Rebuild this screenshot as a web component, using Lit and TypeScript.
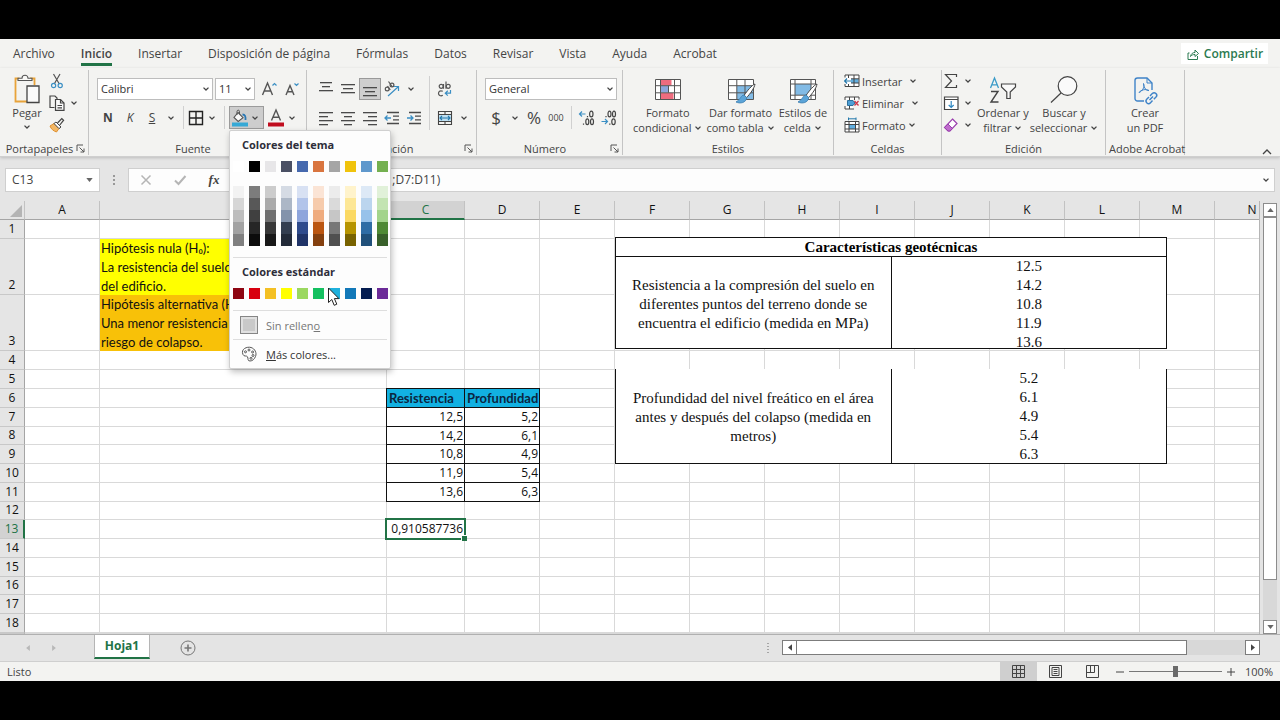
import { LitElement, html, css, nothing, TemplateResult } from "lit";
import { customElement, state } from "lit/decorators.js";
import { classMap } from "lit/directives/class-map.js";
import { styleMap } from "lit/directives/style-map.js";

const chevron = html`<svg class="chev" viewBox="0 0 8 8" width="8" height="8" aria-hidden="true"><path d="M1.500 2.600 4 5l2.500-2.400" fill="none" stroke="#444" stroke-width="1.300"/></svg>`;

const lines = (rows: number[][]) => html`<svg viewBox="0 0 16 16" width="16" height="16" aria-hidden="true">${rows.map(
  ([x, y, w]) => html`<svg x=${x} y=${y} width=${w} height="1.300"><rect width="100%" height="100%" fill="#4a4a4a"/></svg>`
)}</svg>`;

const icon = {
  paste: html`<svg viewBox="0 0 28 30" width="28" height="30" fill="none"><path d="M6.500 4.500H2.500v23H15M17 4.500h4.500V11" stroke="#e8a33a" stroke-width="1.800"/><path d="M5 6.500h14V4.200h-4a3 3 0 0 0-6 0H5z" fill="#f8f8f6" stroke="#555" stroke-width="1.100"/><path d="M14 12h12v16.500H14z" fill="#fafafa" stroke="#444" stroke-width="1.300"/></svg>`,
  cut: html`<svg viewBox="0 0 16 16" width="16" height="16" fill="none"><path d="m4.500 1 5.800 10M11 1 5.200 11" stroke="#555" stroke-width="1.200"/><circle cx="4.600" cy="12.500" r="2.100" stroke="#3b8fc4" stroke-width="1.200"/><circle cx="11.200" cy="12.500" r="2.100" stroke="#3b8fc4" stroke-width="1.200"/></svg>`,
  copy: html`<svg viewBox="0 0 16 16" width="16" height="16" fill="none" stroke="#444" stroke-width="1.200"><path d="M5.500 12.500H1V1h5l2 2v1"/><path d="M6.500 4.500h5l3.500 3.500v7.300H6.500z" fill="#fafafa"/><path d="M11.500 4.500V8H15M8.500 10.500h4.500M8.500 12.800h4.500"/></svg>`,
  brush: html`<svg viewBox="0 0 16 16" width="16" height="16" fill="none"><path d="m1 9 4-2.500 5 5L7.500 15C4.500 14 2 12 1 9z" fill="#f3b765" stroke="#df8f2d"/><path d="m5 6.500 2-1.500 5 5-2 1.600z" fill="#fff" stroke="#444"/><path d="m8.500 6 4.300-4.500 1.800 1.700L10.800 8" stroke="#444" stroke-width="1.200"/></svg>`,
  borders: html`<svg viewBox="0 0 16 16" width="16" height="16" fill="none" stroke="#222" stroke-width="1.400"><path d="M1.500 1.500h13v13h-13zM8 1.500v13M1.500 8h13"/></svg>`,
  fill: html`<svg viewBox="0 0 16 18" width="16" height="18" fill="none"><path d="m6 3.500 5 5.200-4.800 3.800L2 8.500z" fill="#fafafa" stroke="#555" stroke-width="1.100"/><path d="M5 6V2.500c0-1.800 2.500-1.800 2.500 0V5" stroke="#555"/><path d="M10.500 5.500c2.500 0 3.300 2 3 5.500" stroke="#2978b5" stroke-width="1.800"/><path d="M0 13.500h16v4H0z" fill="#36a9d6"/></svg>`,
  fontColor: html`<svg viewBox="0 0 16 18" width="16" height="18" fill="none"><path d="M3.500 11.500 8 1l4.500 10.500M5 8.200h6" stroke="#555" stroke-width="1.400"/><path d="M0 13.500h16v4H0z" fill="#c00d1e"/></svg>`,
  grow: html`<svg viewBox="0 0 18 16" width="18" height="16" fill="none"><path d="M1.500 14 6.500 2l5 12M3.200 10h6.600" stroke="#555" stroke-width="1.400"/><path d="m11.500 4.500 2-2 2 2" stroke="#3b8fc4" stroke-width="1.200"/></svg>`,
  shrink: html`<svg viewBox="0 0 18 16" width="18" height="16" fill="none"><path d="M1 14 5 4.500 9 14M2.500 10.800h5" stroke="#555" stroke-width="1.400"/><path d="m9.500 2.500 2 2 2-2" stroke="#3b8fc4" stroke-width="1.200"/></svg>`,
  orient: html`<svg viewBox="0 0 18 16" width="18" height="16" fill="none"><g stroke="#555" stroke-width="1.200"><circle cx="4.200" cy="8" r="1.900"/><path d="m4.500 5.200 2.800 3.600M5.500 .500l4 5.500"/><circle cx="9" cy="4" r="1.900"/></g><path d="m5 15 10-9M11 5.500h4.500V10" stroke="#3b8fc4" stroke-width="1.200"/></svg>`,
  wrap: html`<svg viewBox="0 0 16 16" width="16" height="16" fill="none"><g stroke="#555" stroke-width="1.200"><circle cx="4.200" cy="5.300" r="2"/><path d="M6.500 3v4.800M9 .500v7.300"/><circle cx="11.200" cy="5.300" r="2"/><path d="M5.800 10.300c-3-1.500-4.300.700-4.300 2.200s2 3.300 4.300 1.800"/></g><path d="M13.500 9v3.200H8.500M10.800 9.800 8.300 12.200l2.500 2.500" stroke="#3b8fc4" stroke-width="1.200"/></svg>`,
  merge: html`<svg viewBox="0 0 16 16" width="16" height="16" fill="none"><path d="M1.500 1.500h13v13h-13zM1.500 4.500h13M1.500 11.500h13M8 1.500v3M8 11.500v3" stroke="#444" stroke-width="1.100"/><path d="M2 5h12v6H2z" fill="#bfe0f2"/><path d="M3 8h10M5 6 3 8l2 2M11 6l2 2-2 2" stroke="#2378ac" stroke-width="1.100"/></svg>`,
  outdent: html`<svg viewBox="0 0 16 16" width="16" height="16" fill="none" stroke="#4a4a4a" stroke-width="1.300"><path d="M3 2.500h12M9 6.200h6M9 9.800h6M3 13.500h12"/><path d="M1 8h6M3.500 5.500 1 8l2.500 2.500" stroke="#3b8fc4"/></svg>`,
  indent: html`<svg viewBox="0 0 16 16" width="16" height="16" fill="none" stroke="#4a4a4a" stroke-width="1.300"><path d="M3 2.500h12M9 6.200h6M9 9.800h6M3 13.500h12"/><path d="M1 8h6M4.500 5.500 7 8l-2.500 2.500" stroke="#3b8fc4"/></svg>`,
  decMore: html`<svg viewBox="0 0 18 16" width="18" height="16" fill="none" stroke="#444" stroke-width="1.200"><path d="M1.500 4h6M4 1.500 1.500 4 4 6.500" stroke="#3b8fc4"/><path d="M9.500 6v1.200M5.500 13.500v1.200"/><ellipse cx="13.300" cy="4" rx="1.700" ry="2.900"/><ellipse cx="9.300" cy="11.800" rx="1.500" ry="2.900"/><ellipse cx="14" cy="11.800" rx="1.500" ry="2.900"/></svg>`,
  decLess: html`<svg viewBox="0 0 18 16" width="18" height="16" fill="none" stroke="#444" stroke-width="1.200"><path d="M1.500 11.500h6M5 9l2.500 2.500L5 14" stroke="#3b8fc4"/><path d="M6 6v1.200M9.800 13.500v1.200"/><ellipse cx="9.500" cy="4" rx="1.500" ry="2.900"/><ellipse cx="14" cy="4" rx="1.500" ry="2.900"/><ellipse cx="13.500" cy="11.800" rx="1.700" ry="2.900"/></svg>`,
  cond: html`<svg viewBox="0 0 28 28" width="28" height="28" fill="none"><path d="M1.500 3.500h25v20h-25z" fill="#fff"/><path d="M6.500 4h11v5.500h-11z" fill="#ef6c7f"/><path d="M6.500 10h8v6.500h-8z" fill="#8ea6dc"/><path d="M6.500 17h13v6.500h-13z" fill="#ef6c7f"/><path d="M1.500 3.500h25v20h-25zM6.500 3.500v20M20.500 3.500v20M1.500 9.700h25M1.500 16.800h25M14.500 9.700v7" stroke="#555"/></svg>`,
  table: html`<svg viewBox="0 0 28 28" width="28" height="28" fill="none"><path d="M1.500 3.500h25v20h-25z" fill="#fff"/><path d="M10 10h16.500v13.500H10z" fill="#82bbe6"/><path d="M1.500 3.500h25v20h-25zM9.800 3.500v20M18 3.500v20M1.500 9.700h25M1.500 16.800h25" stroke="#555"/><path d="M28 8c-3 1-8 7-11 11.500l2.500 2.200C23 18 27.500 12 28 8z" fill="#fff" stroke="#444"/><path d="M17 19c-3 0-3 4-8 7 4 2 10 1 10.800-4.500z" fill="#5ba4d8" stroke="#3a7cae" stroke-width=".800"/></svg>`,
  cellStyle: html`<svg viewBox="0 0 28 28" width="28" height="28" fill="none"><path d="M1.500 3.500h25v20h-25z" fill="#fff"/><path d="M6 8h16v11H6z" fill="#82bbe6"/><path d="M1.500 3.500h25v20h-25zM6 3.500v20M22 3.500v20M1.500 8h25M1.500 19.200h25" stroke="#555"/><path d="M28 8c-3 1-8 7-11 11.500l2.500 2.200C23 18 27.500 12 28 8z" fill="#fff" stroke="#444"/><path d="M17 19c-3 0-3 4-8 7 4 2 10 1 10.800-4.500z" fill="#5ba4d8" stroke="#3a7cae" stroke-width=".800"/></svg>`,
  insert: html`<svg viewBox="0 0 16 16" width="16" height="16" fill="none"><path d="M1.500 2h13v11.500h-13z" fill="#fff"/><path d="M7 6h7.500v4H7z" fill="#62afe0"/><path d="M1 2h14v11.500H1M4.500 2v3M10 2v11.500M4.500 11v2.500M1 2v2.500M1 11v2.500M7 5.800h8M7 10h8" stroke="#444"/><path d="M0 8h7M3 5.500.700 8 3 10.500" stroke="#2378ac" stroke-width="1.200"/></svg>`,
  remove: html`<svg viewBox="0 0 16 16" width="16" height="16" fill="none"><path d="M1 2h14v2.500H1zM1 11.500h8V14H1z" fill="#fff"/><path d="M3.500 5.500H9l2 2.500-2 2.500H3.500z" fill="#4d9fd6" stroke="#2c6f9c"/><path d="M1 5V2h14v2.500M5.500 2v3M10.500 2v3M1 11v3h9M5.500 11v3" stroke="#444"/><path d="m10.500 6 4 4.500M14.500 6l-4 4.500" stroke="#cc3a4b" stroke-width="1.300"/></svg>`,
  format: html`<svg viewBox="0 0 16 16" width="16" height="16" fill="none"><path d="M1 4.500h14V15H1z" fill="#fff"/><path d="M5 7h6.500v5H5z" fill="#62afe0"/><path d="M1 4.500h14V15H1zM5 4.500V15M11.500 4.500V15M1 7.500h14M1 12h14" stroke="#444"/><path d="M4.500 1.800h7.500M4.500.500v2.800M12 .500v2.800" stroke="#2378ac"/></svg>`,
  sigma: html`<svg viewBox="0 0 16 16" width="16" height="16" fill="none" stroke="#444" stroke-width="1.200"><path d="M13.500 4V1.500H2.500L8.500 8l-6 6.500h11V12"/></svg>`,
  fillDown: html`<svg viewBox="0 0 16 16" width="16" height="16" fill="none"><path d="M1.500 2h13.500v12.500H1.500zM1.500 4.500H15" fill="#fff" stroke="#444" stroke-width="1.200"/><path d="M8.200 6v6.500M5.700 10l2.500 2.500 2.500-2.500" stroke="#2f87c0" stroke-width="1.200"/></svg>`,
  eraser: html`<svg viewBox="0 0 16 16" width="16" height="16" fill="none"><path d="M9.500 2 14 6.500 7 14H5L1.500 10.500z" fill="#fff" stroke="#9a3fae" stroke-width="1.200"/><path d="M5 7 9.500 11.500 7 14H5L1.500 10.500z" fill="#bf6ccd" stroke="#9a3fae"/></svg>`,
  sort: html`<svg viewBox="0 0 30 30" width="30" height="30" fill="none"><path d="M2.500 13 6.500 3l4 10M4 9.800h5" stroke="#3b9bc8" stroke-width="1.300"/><path d="M3 16.500h7L3 27h7.500" stroke="#444" stroke-width="1.400"/><path d="M13.500 9h14v3l-5.300 5v6.500h-3.400V17l-5.300-5z" fill="#fafafa" stroke="#444" stroke-width="1.200"/></svg>`,
  find: html`<svg viewBox="0 0 30 30" width="30" height="30" fill="none" stroke="#444" stroke-width="1.200"><circle cx="18.500" cy="11" r="9.300" fill="#fafafa"/><path d="M12 18 2 27.500"/></svg>`,
  pdf: html`<svg viewBox="0 0 28 30" width="28" height="30" fill="none" stroke="#3f83c8" stroke-width="1.400"><path d="M13 26H6.500A2.500 2.500 0 0 1 4 23.500v-18A2.500 2.500 0 0 1 6.500 3H16l5 5v7"/><path d="M16 3v5h5" stroke-width="1"/><path d="M12.500 8.500c1.500 4-1.500 8-4.500 9 1.500-2.500 7-4 10-2-2.500.500-5-2-5.500-7z" stroke-width="1"/><path d="m19 21 2.300-2.400a2.500 2.500 0 0 1 3.700 3.500L22.800 24.300M21.500 25.500l-2 2.200a2.500 2.500 0 0 1-3.800-3.400l2.300-2.400M18.500 25l3.500-3.600"/></svg>`,
  share: html`<svg viewBox="0 0 14 14" width="14" height="14" fill="none" stroke="#2b7a50"><path d="M3.500 6H2v6.500h9.500V9M4.500 9.500C5 6.500 7 5.500 9 5.500V3l3.500 3.500L9 9.500V7.500c-2 0-3.500.500-4.500 2z"/></svg>`,
  launcher: html`<svg viewBox="0 0 9 9" width="9" height="9" fill="none" stroke="#555"><path d="M1 7V1h6M3.500 3.500 8 8M8 4.500V8H4.500"/></svg>`,
  palette: html`<svg viewBox="0 0 16 16" width="16" height="16" fill="none" stroke="#555"><path d="M2 8.500C-.500 3 6 .300 10 1.500c4 1.200 6 5.500 4.500 9-1 2.500-3 4.500-5.500 4.500-2.800 0-1.500-2.500-2.500-4.200C5.500 9.200 3 11 2 8.500z"/><circle cx="4.500" cy="5.800" r="1"/><circle cx="8" cy="4" r="1"/><circle cx="11.600" cy="6" r="1"/><circle cx="12" cy="9.500" r="1"/><circle cx="10" cy="12.300" r="1"/></svg>`,
  cursor: html`<svg viewBox="0 0 13 20" width="13" height="20"><path d="M1.500 1v14.500l3.300-3 2.400 5.800 2.600-1.100-2.400-5.600h4.500z" fill="#fff" stroke="#222"/></svg>`,
};

const TABS = ["Archivo", "Inicio", "Insertar", "Disposición de página", "Fórmulas", "Datos", "Revisar", "Vista", "Ayuda", "Acrobat"];
const THEME = ["#ffffff", "#000000", "#e7e6e8", "#4a5064", "#4669ae", "#d9753f", "#a5a5a5", "#f0c30c", "#5f98cc", "#74b050"];
const SHADES = [
  ["#f2f2f2", "#7c7c7c", "#cccccc", "#d5dbe4", "#d8e1f3", "#fbe4d5", "#ececec", "#fff3cb", "#dde9f6", "#e1f1d9"],
  ["#d6d6d6", "#585858", "#aaaaaa", "#acb7c6", "#b2c4ea", "#f6cbac", "#dadada", "#fde796", "#bbd5ee", "#c3e4b2"],
  ["#bdbdbd", "#404040", "#707070", "#8393ab", "#8ea5dc", "#efac7f", "#c6c6c6", "#fbd963", "#97c2ea", "#a3d48b"],
  ["#a2a2a2", "#262626", "#383838", "#333e50", "#2f4b8c", "#bb5611", "#777777", "#b69400", "#2f6da5", "#4f8a35"],
  ["#808080", "#0c0c0c", "#181818", "#222a38", "#203468", "#84400f", "#505050", "#786200", "#20507a", "#38602a"],
];
const STANDARD = ["#8e0612", "#d8000f", "#f4c024", "#ffff00", "#9bd860", "#14c060", "#1eb0dc", "#1278b8", "#041c50", "#6b2a98"];
const COLS = "ABCDEFGHIJKLMN".split("");
const ROWS = Array.from({ length: 19 }, (_, i) => i + 1);

const CELLS: Record<string, { text: string | TemplateResult; cls: string }> = {
  B2: { text: html`Hipótesis nula (H₀):<br />La resistencia del suelo no influye en el<br />del edificio.`, cls: "note yellow" },
  B3: { text: html`Hipótesis alternativa (H₁):<br />Una menor resistencia aumenta el<br />riesgo de colapso.`, cls: "note orange" },
  C6: { text: "Resistencia", cls: "boxed head" },
  D6: { text: "Profundidad", cls: "boxed head" },
  C13: { text: "0,910587736", cls: "num active" },
};
["12,5", "14,2", "10,8", "11,9", "13,6"].forEach((v, i) => (CELLS[`C${7 + i}`] = { text: v, cls: "boxed num" }));
["5,2", "6,1", "4,9", "5,4", "6,3"].forEach((v, i) => (CELLS[`D${7 + i}`] = { text: v, cls: "boxed num" }));

const base = css`
  * { box-sizing: border-box; }
  button, input, select { font: inherit; color: inherit; margin: 0; padding: 0; border: 0; background: none; border-radius: 0; outline: 0; }
  button { display: inline-flex; align-items: center; justify-content: center; }
  svg { display: block; flex: none; overflow: visible; }
`;

@customElement("fill-menu")
export class FillMenu extends LitElement {
  static styles = [base, css`
    :host { display: block; width: 162px; background: #fdfdfd; border: 1px solid #d0d0d0; border-radius: 2px; box-shadow: 1px 3px 6px rgba(0, 0, 0, 0.25); color: #333; }
    h3 { margin: 0; padding-left: 12px; font-size: 11px; line-height: 28px; font-weight: 700; color: #2e2e3a; }
    .swatches { display: grid; grid-template-columns: repeat(10, 11px); column-gap: 5px; padding: 0 3px; }
    .swatch { height: 11px; }
    .shades { padding-top: 14px; }
    .shades .swatch { height: 12px; }
    hr { margin: 0 3px; border: 0; border-top: 1px solid #dedede; }
    .section { padding-bottom: 11px; }
    .item { width: 100%; justify-content: flex-start; height: 28px; padding-left: 10px; gap: 8px; font-size: 11px; }
    .none { width: 18px; height: 18px; background: #c9c9c9; border: 1px solid #858585; box-shadow: inset 0 0 0 2px #e0e0e0; }
    .dim { color: #777; }
    .pal { padding: 0 1px; }
    .top { padding-top: 2px; }
    .cursor { position: absolute; left: 97px; top: 156px; }
  `];
  private swatch(c: string) {
    return html`<button class="swatch" aria-label=${c} style=${styleMap({ background: c })}></button>`;
  }
  render() {
    return html`
      <div class="section">
        <h3>Colores del tema</h3>
        <div class="swatches top">${THEME.map((c) => this.swatch(c))}</div>
        <div class="swatches shades">${SHADES.flat().map((c) => this.swatch(c))}</div>
      </div>
      <hr />
      <div class="section">
        <h3>Colores estándar</h3>
        <div class="swatches top">${STANDARD.map((c) => this.swatch(c))}</div>
      </div>
      <hr />
      <button class="item dim"><span class="none"></span><span>Sin rellen<u>o</u></span></button>
      <hr />
      <button class="item"><span class="pal">${icon.palette}</span><span><u>M</u>ás colores...</span></button>
      <div class="cursor">${icon.cursor}</div>`;
  }
}

@customElement("work-sheet")
export class WorkSheet extends LitElement {
  static styles = [base, css`
    :host { display: flex; background: #e4e4e4; }
    .view { position: relative; flex: 1; min-width: 0; overflow: hidden; border-right: 1px solid #b5b5b5; background: #fff; }
    .grid { display: grid; height: 100%; font: 12px/18px "Open Sans", sans-serif; color: #111;
      grid-template-columns: 25px 75px 287px 78px repeat(10, 75px) minmax(75px, 1fr);
      grid-template-rows: 19px minmax(0, 1fr) repeat(2, minmax(0, 3fr)) repeat(15, minmax(0, 1fr)) 1px; }
    .grid thead, .grid tbody, .grid tr { display: contents; }
    .grid th, .grid td { padding: 0; min-width: 0; border-right: 1px solid #d9d9d9; border-bottom: 1px solid #d9d9d9; }
    .grid th { background: #e5e5e5; font-weight: 400; display: flex; align-items: center; justify-content: center; }
    .grid thead th { border-right-color: #c2c2c2; border-bottom-color: #a5a5a5; }
    .grid tbody th { border-right-color: #a5a5a5; border-bottom-color: #c8c8c8; align-items: flex-end; overflow: hidden; }
    .grid thead .sel { background: #d2d2d2; color: #217346; border-bottom: 2px solid #217346; }
    .grid tbody .sel { background: #d2d2d2; color: #217346; border-right: 2px solid #217346; }
    .grid .corner { align-items: flex-end; justify-content: flex-end; padding: 2px 2px 2px 0; }
    .grid td { white-space: nowrap; overflow: hidden; }
    .grid .note { padding-left: 1px; font-family: Lato, "Open Sans", sans-serif; font-size: 13px; line-height: 19px; }
    .grid .yellow { background: #ffff00; border-color: #ffff00; }
    .grid .orange { background: #f8c108; border-color: #f8c108; }
    .grid .boxed { border-color: #111; margin-left: -1px; border-left: 1px solid #111; }
    .grid .head { background: #12b1e2; font-family: Lato, "Open Sans", sans-serif; font-weight: 700; color: #0b2540; padding-left: 2px; margin-top: -1px; border-top: 1px solid #111; font-size: 13px; }
    .grid .num { text-align: right; padding-right: 1px; }
    .grid .active { position: relative; overflow: visible; outline: 2px solid #217346; outline-offset: -1px; margin: -1px 0 0 -1px; border: 0; padding: 1px 2px 0 0; }
    .grid .active::after { content: ""; position: absolute; right: -2px; bottom: -2px; width: 5px; height: 5px; background: #217346; border: 1px solid #fff; border-width: 1px 0 0 1px; }
    .figure { position: absolute; left: 615px; width: 552px; background: #fff; border-collapse: collapse; table-layout: fixed; font: 15px/19px "Liberation Serif", serif; color: #111; text-align: center; }
    .figure th { padding: 0; font-weight: 700; height: 19px; line-height: 18px; color: #000; border: 1px solid #111; }
    .figure td { border: 1px solid #111; white-space: nowrap; height: 92px; vertical-align: middle; padding: 3px 0 0; }
    .figure .nums { vertical-align: top; padding: 0; }
    .values { height: 90px; }
    .first { top: 36px; }
    .second { top: 168px; }
    .second td { border-top: 0; height: 94px; }
    .bar { width: 20px; display: flex; flex-direction: column; align-items: center; padding: 2px 3px 0; }
    .arrow { width: 14px; height: 14px; background: #fff; border: 1px solid #8c8c8c; flex: none; }
    .track { flex: 1; width: 14px; background: #d8d8d8; display: flex; flex-direction: column; }
    .thumb { flex: none; height: 90%; background: #fff; border: 1px solid #8c8c8c; }
  `];
  render() {
    return html`
      <div class="view">
        <table class="grid">
          <thead><tr>
            <th class="corner"><svg viewBox="0 0 12 12" width="12" height="12"><path d="M12 0v12H0z" fill="#b4b4b4"/></svg></th>
            ${COLS.map((c) => html`<th class=${c === "C" ? "sel" : ""}>${c}</th>`)}
          </tr></thead>
          <tbody>${ROWS.map((r) => html`<tr>
            <th class=${r === 13 ? "sel" : ""}>${r < 19 ? r : nothing}</th>
            ${COLS.map((c) => {
              const cell = CELLS[c + r];
              return html`<td class=${cell ? cell.cls : ""}>${cell ? cell.text : nothing}</td>`;
            })}
          </tr>`)}</tbody>
        </table>
        <table class="figure first">
          <thead><tr><th colspan="2">Características geotécnicas</th></tr></thead>
          <tbody><tr>
            <td>Resistencia a la compresión del suelo en<br />diferentes puntos del terreno donde se<br />encuentra el edificio (medida en MPa)</td>
            <td class="nums"><div class="values">12.5<br />14.2<br />10.8<br />11.9<br />13.6</div></td>
          </tr></tbody>
        </table>
        <table class="figure second">
          <tbody><tr>
            <td>Profundidad del nivel freático en el área<br />antes y después del colapso (medida en<br />metros)</td>
            <td class="nums"><div class="values">5.2<br />6.1<br />4.9<br />5.4<br />6.3</div></td>
          </tr></tbody>
        </table>
      </div>
      <div class="bar">
        <button class="arrow" aria-label="Subir"><svg viewBox="0 0 8 5" width="7" height="4"><path d="M0 5h8L4 0z" fill="#666"/></svg></button>
        <div class="track"><div class="thumb"></div></div>
        <button class="arrow" aria-label="Bajar"><svg viewBox="0 0 8 5" width="7" height="4"><path d="M0 0h8L4 5z" fill="#666"/></svg></button>
      </div>`;
  }
}

@customElement("app-root")
export class AppRoot extends LitElement {
  @state() private tab = "Inicio";
  @state() private menuOpen = true;

  static styles = [base, css`
    :host { display: flex; flex-direction: column; box-sizing: border-box; height: 100vh; padding: 39px 0; background: #000; font: 12px/16px "Open Sans", "Noto Sans", sans-serif; color: #444; }
    .app { flex: 1; display: flex; flex-direction: column; background: #e5e5e5; min-width: 0; min-height: 0; overflow: hidden; }
    .tabs { display: flex; flex: none; align-items: center; gap: 26px; height: 29px; padding: 0 12px 0 13px; background: #f3f3f1; }
    .tabs button { height: 25px; border-bottom: 3px solid transparent; padding-top: 3px; white-space: nowrap; }
    .tabs .on { font-weight: 600; border-bottom-color: #217346; }
    .tabs .share { margin-left: auto; width: 87px; height: 21px; padding: 0; gap: 4px; border: 0; background: #fff; color: #2b7a50; font-weight: 600; }
    .ribbon { display: flex; flex: none; height: 89px; background: #f3f3f1; padding: 2px 0 0; border-bottom: 1px solid #cfcfcf; box-shadow: 0 1px 3px rgba(0, 0, 0, 0.18); font-size: 11px; line-height: 15px; position: relative; z-index: 2; }
    .group { display: flex; flex-direction: column; flex: none; border-right: 1px solid #c4c4c4; height: 85px; }
    .body { flex: 1; display: flex; }
    .foot { display: flex; align-items: center; height: 14px; padding: 0 3px; }
    .foot span { flex: 1; text-align: center; white-space: nowrap; }
    .w90 { width: 89px; } .w218 { width: 218px; } .w170 { width: 170px; } .w146 { width: 146px; }
    .w210 { width: 211px; } .w108 { width: 108px; } .w164 { width: 164px; } .w79 { width: 79px; }
    .col { display: flex; flex-direction: column; }
    .rows { display: flex; flex-direction: column; gap: 6px; padding: 7px 0 0 8px; }
    .row { display: flex; align-items: center; height: 23px; }
    .b { width: 22px; height: 22px; }
    .s { width: 16px; height: 16px; }
    .c { width: 16px; height: 22px; }
    .on-b { background: #cfcfcf; border: 1px solid #9a9a9a; }
    .sep { width: 1px; height: 23px; margin: 0 4px; background: #d0d0d0; }
    .tall { height: 54px; margin: 6px 4px 0; }
    .side { padding-left: 0; }
    .glyph { font-size: 12px; }
    .strong { font-weight: 700; }
    .it { font-style: italic; }
    .money { font-size: 17px; }
    .zeros { font-size: 9px; }
    .combo { display: flex; align-items: center; height: 22px; background: #fff; border: 1px solid #bdbdbd; padding: 0 2px 0 3px; color: #333; }
    .combo input, .combo select { flex: 1; min-width: 0; width: 100%; appearance: none; height: 20px; }
    .font { width: 116px; margin-right: 2px; } .size { width: 40px; margin-right: 3px; } .number { width: 132px; }
    .aa { width: 24px; height: 22px; }
    .split { position: relative; display: flex; width: 35px; height: 23px; background: #cdcdcd; border: 1px solid #9b9b9b; align-items: center; justify-content: space-between; padding: 0 2px; margin-right: 4px; }
    .split .c { width: 14px; }
    .menu { position: absolute; top: 23px; left: -1px; z-index: 5; }
    .paste { width: 42px; margin-left: 6px; padding-top: 4px; flex-direction: column; justify-content: flex-start; }
    .paste span { padding: 1px 0 2px; line-height: 16px; }
    .tools { display: flex; flex-direction: column; justify-content: flex-start; }
    .tools .row { height: 22px; }
    .tools .b { width: 18px; }
    .big { display: inline-flex; flex-direction: column; justify-content: flex-start; padding-top: 4px; white-space: nowrap; }
    .big .ic { height: 31px; display: flex; align-items: center; }
    .big .t { display: flex; align-items: center; gap: 3px; height: 15px; }
    .styles { gap: 4px; padding-left: 10px; }
    .cells { padding: 0 0 0 10px; }
    .cells button { height: 22px; gap: 2px; justify-content: flex-start; }
    .gap { width: 3px; }
    .edit .big { margin-left: 1px; }
    .center { justify-content: center; }
    .collapse { margin: auto 8px 1px auto; }
    .formula { display: flex; flex: none; align-items: center; height: 44px; padding: 2px 5px 0; color: #444; }
    .namebox { display: flex; align-items: center; width: 95px; height: 24px; padding: 0 6px; background: #fff; border: 1px solid #cfcfcf; }
    .namebox input { flex: 1; min-width: 0; }
    .dots { width: 28px; display: flex; justify-content: center; }
    .fx { display: flex; flex: 1; align-items: center; height: 24px; background: #fdfdfd; border: 1px solid #cfcfcf; }
    .fx .k { width: 34px; height: 22px; }
    .fx .line { flex: 1; min-width: 0; padding-left: 16px; }
    .fxi { font: italic 700 13px/16px "Liberation Serif", serif; }
    work-sheet { flex: 1; min-height: 0; }
    .sheetbar { display: flex; flex: none; height: 28px; border-top: 1px solid #b0b0b0; border-bottom: 1px solid #cfcfcf; background: #e4e4e4; align-items: center; padding: 0 20px 1px 0; }
    .nav { width: 26px; height: 20px; }
    .navs { display: flex; padding-left: 15px; width: 94px; }
    .sheet { width: 56px; height: 24px; align-self: flex-start; background: #fff; border-bottom: 2px solid #217346; border-left: 1px solid #b5b5b5; border-right: 1px solid #b5b5b5; color: #217346; font-weight: 700; }
    .plus { margin-left: 30px; }
    .space { flex: 1; }
    .h { display: flex; width: 478px; margin-left: 13px; }
    .h .arrow { width: 15px; height: 15px; background: #fff; border: 1px solid #7c7c7c; flex: none; }
    .h .track { flex: 1; background: #d8d8d8; }
    .h .thumb { width: 87%; height: 15px; background: #fff; border: 1px solid #7c7c7c; border-left: 0; }
    .status { display: flex; flex: none; align-items: center; height: 19px; background: #f3f3f1; padding: 0 7px; font-size: 11px; }
    .v { width: 37px; height: 19px; }
    .von { background: #cfcfcf; }
    .z { width: 18px; height: 18px; }
    .zoom { appearance: none; width: 93px; height: 14px; background: linear-gradient(#777, #777) center / 100% 1px no-repeat; }
    .zoom::-webkit-slider-thumb { appearance: none; width: 5px; height: 11px; background: #6a6a6a; }
    .pct { width: 33px; text-align: right; }
  `];

  private big(ic: TemplateResult, a: string, b: string, chev = true) {
    return html`<button class="big"><span class="ic">${ic}</span><span class="t">${a}</span><span class="t">${b}${chev ? chevron : nothing}</span></button>`;
  }
  private foot(t: string, launch = true) {
    return html`<div class="foot"><span>${t}</span>${launch ? html`<button aria-label=${`Configuración de ${t}`}>${icon.launcher}</button>` : nothing}</div>`;
  }
  private b(content: TemplateResult | string, label: string, cls = "b") {
    return html`<button class=${cls} aria-label=${label}>${content}</button>`;
  }
  private al(rows: number[][], label: string, cls = "b") {
    return html`<button class=${cls} aria-label=${label}>${lines(rows)}</button>`;
  }

  render() {
    return html`<main class="app">
      <nav class="tabs">
        ${TABS.map((t) => html`<button class=${classMap({ on: t === this.tab })} @click=${() => (this.tab = t)}>${t}</button>`)}
        <button class="share">${icon.share}Compartir</button>
      </nav>

      <section class="ribbon">
        <div class="group w90">
          <div class="body">
            <button class="paste">${icon.paste}<span>Pegar</span>${chevron}</button>
            <div class="tools">
              <div class="row">${this.b(icon.cut, "Cortar", "b")}</div>
              <div class="row">${this.b(icon.copy, "Copiar", "b")}${this.b(chevron, "Opciones de copiar", "s")}</div>
              <div class="row">${this.b(icon.brush, "Copiar formato", "b")}</div>
            </div>
          </div>
          ${this.foot("Portapapeles")}
        </div>

        <div class="group w218">
          <div class="body"><div class="rows">
            <div class="row">
              <label class="combo font"><input aria-label="Fuente" value="Calibri" />${chevron}</label>
              <label class="combo size"><input aria-label="Tamaño" value="11" />${chevron}</label>
              ${this.b(icon.grow, "Aumentar fuente", "aa")}${this.b(icon.shrink, "Reducir fuente", "aa")}
            </div>
            <div class="row">
              <button class="b glyph strong">N</button><button class="b glyph it">K</button><button class="b glyph"><u>S</u></button>
              ${this.b(chevron, "Subrayado", "c")}<i class="sep"></i>
              ${this.b(icon.borders, "Bordes", "s")}${this.b(chevron, "Opciones de bordes", "c")}<i class="sep"></i>
              <div class="split">
                ${this.b(icon.fill, "Color de relleno", "s")}
                <button class="c" aria-label="Opciones de relleno" @click=${() => (this.menuOpen = !this.menuOpen)}>${chevron}</button>
                ${this.menuOpen ? html`<fill-menu class="menu"></fill-menu>` : nothing}
              </div>
              ${this.b(icon.fontColor, "Color de fuente", "s")}${this.b(chevron, "Opciones de color", "c")}
            </div>
          </div></div>
          ${this.foot("Fuente")}
        </div>

        <div class="group w170">
          <div class="body">
            <div class="rows">
              <div class="row">
                ${this.al([[2, 1, 12], [4, 5, 8], [1, 9, 14]], "Alinear arriba")}
                ${this.al([[1, 3, 14], [3, 7, 10], [1, 11, 14]], "Alinear al medio")}
                ${this.al([[1, 6, 14], [3, 10, 10], [1, 14, 14]], "Alinear abajo", "b on-b")}
                ${this.b(icon.orient, "Orientación")}${this.b(chevron, "Opciones de orientación", "c")}
              </div>
              <div class="row">
                ${this.al([[1, 2, 14], [1, 6, 9], [1, 10, 14], [1, 14, 9]], "Izquierda")}
                ${this.al([[1, 2, 14], [4, 6, 8], [1, 10, 14], [4, 14, 8]], "Centrar")}
                ${this.al([[1, 2, 14], [6, 6, 9], [1, 10, 14], [6, 14, 9]], "Derecha")}
                ${this.b(icon.outdent, "Disminuir sangría")}${this.b(icon.indent, "Aumentar sangría")}
              </div>
            </div>
            <i class="sep tall"></i>
            <div class="rows side">
              <div class="row">${this.b(icon.wrap, "Ajustar texto")}</div>
              <div class="row">${this.b(icon.merge, "Combinar y centrar")}${this.b(chevron, "Opciones de combinar", "s")}</div>
            </div>
          </div>
          ${this.foot("Alineación")}
        </div>

        <div class="group w146">
          <div class="body"><div class="rows">
            <div class="row"><label class="combo number"><select aria-label="Formato de número"><option>General</option></select>${chevron}</label></div>
            <div class="row">
              <button class="b money">$</button>${this.b(chevron, "Moneda", "c")}<button class="b money">%</button><button class="b zeros">000</button><i class="sep"></i>
              ${this.b(icon.decMore, "Aumentar decimales")}${this.b(icon.decLess, "Disminuir decimales")}
            </div>
          </div></div>
          ${this.foot("Número")}
        </div>

        <div class="group w210">
          <div class="body styles">
            ${this.big(icon.cond, "Formato", "condicional")}${this.big(icon.table, "Dar formato", "como tabla")}${this.big(icon.cellStyle, "Estilos de", "celda")}
          </div>
          ${this.foot("Estilos", false)}
        </div>

        <div class="group w108">
          <div class="body col cells">
            <button>${icon.insert}Insertar<i class="gap"></i>${chevron}</button>
            <button>${icon.remove}Eliminar<i class="gap"></i>${chevron}</button>
            <button>${icon.format}Formato${chevron}</button>
          </div>
          ${this.foot("Celdas", false)}
        </div>

        <div class="group w164">
          <div class="body edit">
            <div class="tools">
              <div class="row">${this.b(icon.sigma, "Autosuma", "b")}${this.b(chevron, "Opciones de suma", "s")}</div>
              <div class="row">${this.b(icon.fillDown, "Rellenar", "b")}${this.b(chevron, "Opciones de rellenar", "s")}</div>
              <div class="row">${this.b(icon.eraser, "Borrar", "b")}${this.b(chevron, "Opciones de borrar", "s")}</div>
            </div>
            ${this.big(icon.sort, "Ordenar y", "filtrar")}${this.big(icon.find, "Buscar y", "seleccionar")}
          </div>
          ${this.foot("Edición", false)}
        </div>

        <div class="group w79">
          <div class="body center">${this.big(icon.pdf, "Crear", "un PDF", false)}</div>
          ${this.foot("Adobe Acrobat", false)}
        </div>
        <button class="collapse" aria-label="Contraer la cinta"><svg viewBox="0 0 10 6" width="10" height="6" fill="none"><path d="m1 5 4-4 4 4" stroke="#444" stroke-width="1.300"/></svg></button>
      </section>

      <section class="formula">
        <label class="namebox"><input aria-label="Cuadro de nombres" value="C13" /><svg viewBox="0 0 8 5" width="7" height="4"><path d="M0 0h8L4 5z" fill="#666"/></svg></label>
        <span class="dots"><svg viewBox="0 0 2 12" width="2" height="12" fill="#999"><path d="M0 1h2v2H0zM0 5h2v2H0zM0 9h2v2H0z"/></svg></span>
        <div class="fx">
          ${this.b(html`<svg viewBox="0 0 12 12" width="12" height="12" fill="none" stroke="#b5b5b5" stroke-width="1.500"><path d="m1.500 1.500 9 9M10.500 1.500l-9 9"/></svg>`, "Cancelar", "k")}
          ${this.b(html`<svg viewBox="0 0 12 12" width="12" height="12" fill="none" stroke="#b5b5b5" stroke-width="2"><path d="m1 6.500 3.500 3.500L11.500 2"/></svg>`, "Introducir", "k")}
          <button class="k fxi">fx</button>
          <input class="line" aria-label="Barra de fórmulas" value="=COEF.DE.CORREL(C7:C11;D7:D11)" />
          <button class="c" aria-label="Expandir">${chevron}</button>
        </div>
      </section>

      <work-sheet></work-sheet>

      <section class="sheetbar">
        <div class="navs">
          ${this.b(html`<svg viewBox="0 0 5 8" width="4" height="6"><path d="M5 0v8L0 4z" fill="#b8b8b8"/></svg>`, "Hoja anterior", "nav")}
          ${this.b(html`<svg viewBox="0 0 5 8" width="4" height="6"><path d="M0 0v8l5-4z" fill="#b8b8b8"/></svg>`, "Hoja siguiente", "nav")}
        </div>
        <button class="sheet">Hoja1</button>
        <button class="plus" aria-label="Hoja nueva"><svg viewBox="0 0 16 16" width="16" height="16" fill="none" stroke="#777"><circle cx="8" cy="8" r="7"/><path d="M8 4.500v7M4.500 8h7" stroke-width="1.600"/></svg></button>
        <span class="space"></span>
        <svg viewBox="0 0 2 12" width="2" height="12" fill="#a5a5a5"><path d="M0 1h2v1H0zM0 4h2v1H0zM0 7h2v1H0zM0 10h2v1H0z"/></svg>
        <div class="h">
          <button class="arrow" aria-label="Izquierda"><svg viewBox="0 0 5 8" width="4" height="7"><path d="M5 0v8L0 4z" fill="#444"/></svg></button>
          <div class="track"><div class="thumb"></div></div>
          <button class="arrow" aria-label="Derecha"><svg viewBox="0 0 5 8" width="4" height="7"><path d="M0 0v8l5-4z" fill="#444"/></svg></button>
        </div>
      </section>

      <footer class="status">
        <span>Listo</span><span class="space"></span>
        ${this.b(html`<svg viewBox="0 0 13 13" width="13" height="13" fill="none" stroke="#444"><path d="M.500.500h12v12H.500zM4.500.500v12M8.500.500v12M.500 4.500h12M.500 8.500h12"/></svg>`, "Normal", "v von")}
        ${this.b(html`<svg viewBox="0 0 13 13" width="13" height="13" fill="none" stroke="#444"><path d="M.500.500h12v12H.500zM3 2.500h7v8H3zM4.500 4.500h4M4.500 6.500h4M4.500 8.500h4"/></svg>`, "Diseño de página", "v")}
        ${this.b(html`<svg viewBox="0 0 13 13" width="13" height="13" fill="none" stroke="#444"><path d="M.500.500h12v12H.500zM.500 7.500h8v-7M4.500.500v7"/></svg>`, "Vista previa de salto de página", "v")}
        <button class="z" aria-label="Alejar"><svg viewBox="0 0 8 8" width="8" height="8"><path d="M0 4h8" stroke="#444"/></svg></button>
        <input class="zoom" type="range" aria-label="Zoom" min="0" max="200" value="100" />
        <button class="z" aria-label="Acercar"><svg viewBox="0 0 8 8" width="8" height="8"><path d="M0 4h8M4 0v8" stroke="#444"/></svg></button>
        <span class="pct">100%</span>
      </footer>
    </main>`;
  }
}
